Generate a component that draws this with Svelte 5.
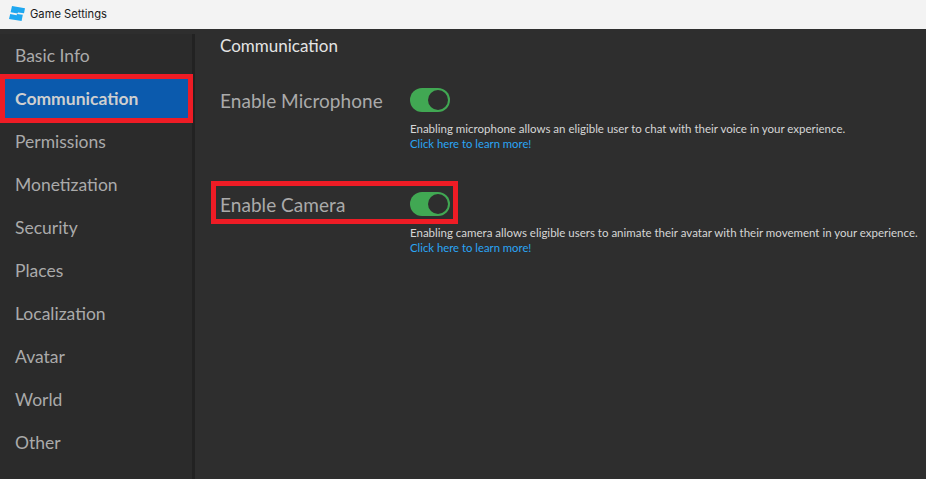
<script>
	const tabs = ['Basic Info', 'Communication', 'Permissions', 'Monetization', 'Security', 'Places', 'Localization', 'Avatar', 'World', 'Other'];
	const selected = 'Communication';

	let settings = $state([
		{
			id: 'mic',
			label: 'Enable Microphone',
			on: true,
			marked: false,
			help: 'Enabling microphone allows an eligible user to chat with their voice in your experience.'
		},
		{
			id: 'cam',
			label: 'Enable Camera',
			on: true,
			marked: true,
			help: 'Enabling camera allows eligible users to animate their avatar with their movement in your experience.'
		}
	]);
</script>

<div class="window">
	<header class="titlebar">
		<svg class="logo" viewBox="0 0 16 15" width="16" height="15" aria-hidden="true">
			<path fill="#1ea7f0" d="M3 0 L16 2.2 L15 7.2 L9 6.4 L8.6 7.6 L1.6 6.2 Z" />
			<path fill="#1ea7f0" d="M1.2 8 L7.6 9.2 L8 8 L13.8 8.8 L12.6 15 L0 13 Z" />
		</svg>
		<span class="title">Game Settings</span>
	</header>

	<div class="body">
		<nav class="sidebar">
			{#each tabs as tab (tab)}
				<div class="tab" class:active={tab === selected}>{tab}</div>
			{/each}
		</nav>

		<main class="content">
			<h1>Communication</h1>
			{#each settings as s (s.id)}
				<section class="setting">
					<div class="row" class:marked={s.marked}>
						<span class="label">{s.label}</span>
						<button class="toggle" class:on={s.on} aria-label={s.label} onclick={() => (s.on = !s.on)}>
							<span class="knob"></span>
						</button>
					</div>
					<p class="help">{s.help}</p>
					<a class="more" href="#learn">Click here to learn more!</a>
				</section>
			{/each}
		</main>
	</div>
</div>

<style>
	:global(body) {
		background: #2e2e2e;
	}
	.window {
		width: 926px;
		height: 479px;
		display: flex;
		flex-direction: column;
		overflow: hidden;
		font-family: "Lato", sans-serif;
	}
	.titlebar {
		height: 29px;
		flex: none;
		display: flex;
		align-items: center;
		gap: 5px;
		padding-left: 9px;
		padding-bottom: 2px;
		box-sizing: border-box;
		background: #f3f3f3;
	}
	.title {
		font-family: "Inter", sans-serif;
		font-size: 11.2px;
		color: #1a1a1a;
	}
	.body {
		flex: 1;
		display: flex;
		min-height: 0;
		background: #2e2e2e;
	}
	.sidebar {
		width: 195px;
		flex: none;
		box-sizing: border-box;
		margin-top: 5px;
		background: #2b2b2b;
		border-right: 3px solid #222222;
	}
	.tab {
		height: 43px;
		display: flex;
		align-items: center;
		padding-left: 15px;
		font-size: 17.5px;
		color: #aaaaaa;
	}
	.tab.active {
		width: 193px;
		height: 49px;
		margin: -3px 0;
		box-sizing: border-box;
		padding-left: 10px;
		border: 5px solid #ee1c25;
		background: #0b5aad;
		font-weight: 700;
		color: #cfcfcf;
	}
	.content {
		flex: 1;
		padding: 7px 0 0 25px;
	}
	h1 {
		margin: 0 0 28px;
		font-size: 17px;
		line-height: 20px;
		font-weight: 400;
		color: #e4e4e4;
	}
	.setting {
		margin-bottom: 37px;
	}
	.row {
		display: flex;
		align-items: center;
		height: 32px;
		width: 230px;
	}
	.row.marked {
		box-sizing: border-box;
		width: 247px;
		height: 43px;
		margin: -7px 0 -4px -9px;
		padding: 3px 3px 0 4px;
		border: 5px solid #ee1c25;
	}
	.label {
		flex: 1;
		font-size: 19px;
		letter-spacing: 0.05px;
		color: #aaaaaa;
	}
	.toggle {
		width: 40px;
		height: 24px;
		flex: none;
		padding: 2px;
		border: 0;
		border-radius: 12px;
		background: #555;
		display: flex;
		align-items: center;
	}
	.toggle.on {
		background: #41a853;
		justify-content: flex-end;
	}
	.knob {
		width: 20px;
		height: 20px;
		border-radius: 50%;
		background: #2e2e2e;
	}
	.help {
		margin: 6px 0 0 190px;
		white-space: nowrap;
		font-size: 11.5px;
		line-height: 14px;
		color: #d6d6d6;
	}
	.more {
		display: block;
		margin: 1px 0 0 190px;
		font-size: 11.3px;
		line-height: 14px;
		color: #2aa5f5;
		text-decoration: none;
	}
</style>
